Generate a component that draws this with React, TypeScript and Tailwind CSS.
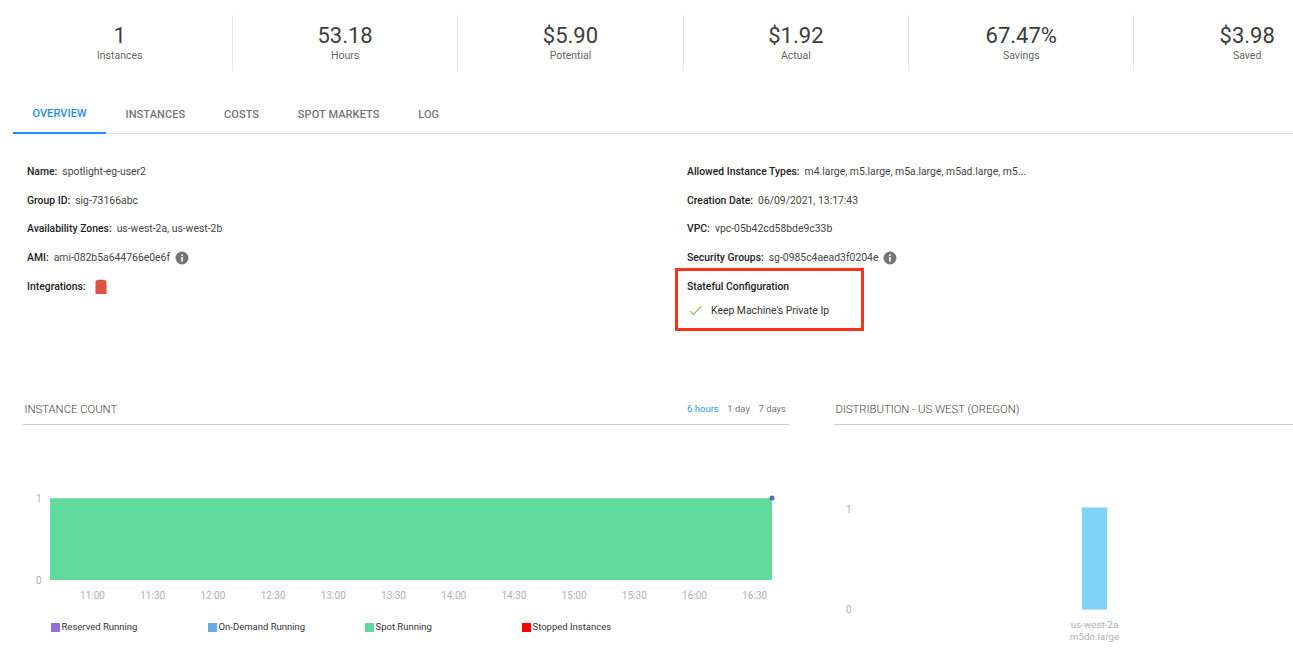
import React from 'react';

const roboto = "font-['Roboto',sans-serif]";

const stats = [
  { value: '1', label: 'Instances' },
  { value: '53.18', label: 'Hours' },
  { value: '$5.90', label: 'Potential' },
  { value: '$1.92', label: 'Actual' },
  { value: '67.47%', label: 'Savings' },
  { value: '$3.98', label: 'Saved' },
];

const tabs = ['OVERVIEW', 'INSTANCES', 'COSTS', 'SPOT MARKETS', 'LOG'];

const times = ['11:00', '11:30', '12:00', '12:30', '13:00', '13:30', '14:00', '14:30', '15:00', '15:30', '16:00', '16:30'];

const legend = [
  { label: 'Reserved Running', color: 'bg-[#9370db]' },
  { label: 'On-Demand Running', color: 'bg-[#64a8e8]' },
  { label: 'Spot Running', color: 'bg-[#61da9e]' },
  { label: 'Stopped Instances', color: 'bg-[#ff0000]' },
];

const InfoIcon = () => (
  <svg viewBox="0 0 14 14" className="h-[14px] w-[14px]">
    <circle cx="7" cy="7" r="6.5" fill="#757575" />
    <rect x="6.2" y="6" width="1.6" height="4.6" fill="#fff" />
    <rect x="6.2" y="3.4" width="1.6" height="1.6" fill="#fff" />
  </svg>
);

const Row = ({ label, children }: { label: string; children: React.ReactNode }) => (
  <div className="flex h-[28.75px] items-center text-[10.4px] text-[#444]">
    <span className="mr-[5px] font-medium text-[#222]">{label}</span>
    {children}
  </div>
);

const SectionTitle = ({ title, children }: { title: string; children?: React.ReactNode }) => (
  <div className="flex h-[30px] items-center justify-between border-b border-[#cccccc] pt-[2px] pl-[1.5px]">
    <span className="text-[11.3px] font-light text-[#444]">{title}</span>
    {children}
  </div>
);

const InstanceChart = () => (
  <svg viewBox="0 0 766 176" className="mt-[20px] block h-[176px] w-[766px]">
    <rect x="27" y="53.5" width="722" height="81.5" fill="#61da9e" />
    <rect x="27" y="53" width="722" height="1" fill="#7fe3b2" />
    <circle cx="749" cy="53" r="2.5" fill="#4f6bbf" />
    <text x="13" y="57" fontSize="10" fill="#b0b0b0">1</text>
    <text x="13" y="139" fontSize="10" fill="#b0b0b0">0</text>
    {times.map((t, i) => (
      <text key={t} x={69.5 + i * 60.2} y="153.5" fontSize="10" fill="#b0b0b0" textAnchor="middle">
        {t}
      </text>
    ))}
  </svg>
);

const DistributionChart = () => (
  <svg viewBox="0 0 459 226" className="mt-[20px] block h-[226px] w-[459px]">
    <rect x="248" y="62.5" width="25" height="102" fill="#81d1fb" />
    <text x="12" y="68" fontSize="10" fill="#b0b0b0">1</text>
    <text x="12" y="168" fontSize="10" fill="#b0b0b0">0</text>
    <text x="260.5" y="183" fontSize="9.8" fill="#b0b0b0" textAnchor="middle">us-west-2a</text>
    <text x="260.5" y="195" fontSize="9.8" fill="#b0b0b0" textAnchor="middle">m5dn.large</text>
  </svg>
);

export default function App() {
  return (
    <div className={`relative h-[654px] w-[1293px] overflow-hidden bg-white ${roboto}`}>
      {/* stats */}
      <div className="flex pl-[7.5px] pt-[15px]">
        {stats.map((s, i) => (
          <div
            key={s.label}
            className={`flex h-[56px] w-[225.4px] shrink-0 flex-col items-center ${i < 5 ? 'border-r border-[#e6e6e6]' : ''}`}
          >
            <span className="mt-[6px] text-[22px] leading-[30px] font-normal text-[#3c3c3c]">{s.value}</span>
            <span className="-mt-px text-[10.5px] leading-[12px] text-[#666]">{s.label}</span>
          </div>
        ))}
      </div>

      {/* tabs */}
      <div className="mt-[22px] ml-[13px] flex h-[41px] border-b border-[#e0e0e0]">
        {tabs.map((t, i) => (
          <div
            key={t}
            className={`-mb-px flex h-[41px] items-center px-[19.4px] pt-[3px] text-[11px] font-medium tracking-[0.08px] ${
              i === 0 ? 'border-b-2 border-[#1f8efa] text-[#1f8efa]' : 'text-[#757575]'
            }`}
          >
            {t}
          </div>
        ))}
      </div>

      {/* details */}
      <div className="mt-[23.4px] flex">
        <div className="ml-[27px] w-[660px]">
          <Row label="Name:">spotlight-eg-user2</Row>
          <Row label="Group ID:">sig-73166abc</Row>
          <Row label="Availability Zones:">us-west-2a, us-west-2b</Row>
          <Row label="AMI:">
            ami-082b5a644766e0e6f
            <span className="ml-[5px]"><InfoIcon /></span>
          </Row>
          <Row label="Integrations:">
            <svg viewBox="0 0 12 15" className="ml-[4px] h-[15px] w-[12px]">
              <path d="M1 1.5 L6 0.5 L11 1.5 V2 H1 Z" fill="#c9544a" />
              <rect x="0.5" y="2" width="11" height="13" fill="#e05243" />
            </svg>
          </Row>
        </div>
        <div className="w-[500px]">
          <Row label="Allowed Instance Types:">m4.large, m5.large, m5a.large, m5ad.large, m5...</Row>
          <Row label="Creation Date:">06/09/2021, 13:17:43</Row>
          <Row label="VPC:">vpc-05b42cd58bde9c33b</Row>
          <Row label="Security Groups:">
            sg-0985c4aead3f0204e
            <span className="ml-[5px]"><InfoIcon /></span>
          </Row>
          <div className="flex h-[28.75px] items-center text-[10.4px] font-medium text-[#222]">Stateful Configuration</div>
          <div className="mt-[2px] flex items-center text-[10.4px] text-[#333]">
            <svg viewBox="0 0 14 11" className="mr-[9px] ml-[2px] h-[11px] w-[13px]" fill="none" stroke="#8bc34a" strokeWidth="1.2">
              <path d="M0.8 5.8 L4.8 9.8 L13.2 0.8" />
            </svg>
            Keep Machine's Private Ip
          </div>
        </div>
      </div>

      {/* annotation */}
      <div className="absolute top-[268px] left-[675px] h-[63px] w-[189px] border-[3px] border-[#f8331c]" />

      {/* charts */}
      <div className="absolute top-[395px] left-[23px] flex">
        <div className="w-[766px]">
          <SectionTitle title="INSTANCE COUNT">
            <div className="mr-[3px] -mt-[3px] flex gap-[8.5px] text-[9.5px] text-[#777]">
              <span className="text-[#2d9cf5]">6 hours</span>
              <span>1 day</span>
              <span>7 days</span>
            </div>
          </SectionTitle>
          <InstanceChart />
          <div className="-mt-[1px] flex pl-[28px] text-[9.5px] text-[#333]">
            {legend.map((l) => (
              <div key={l.label} className="flex w-[157px] items-center">
                <span className={`mr-[1.5px] h-[9px] w-[9px] ${l.color}`} />
                {l.label}
              </div>
            ))}
          </div>
        </div>
        <div className="ml-[45px] w-[459px]">
          <SectionTitle title="DISTRIBUTION - US WEST (OREGON)" />
          <DistributionChart />
        </div>
      </div>
    </div>
  );
}
